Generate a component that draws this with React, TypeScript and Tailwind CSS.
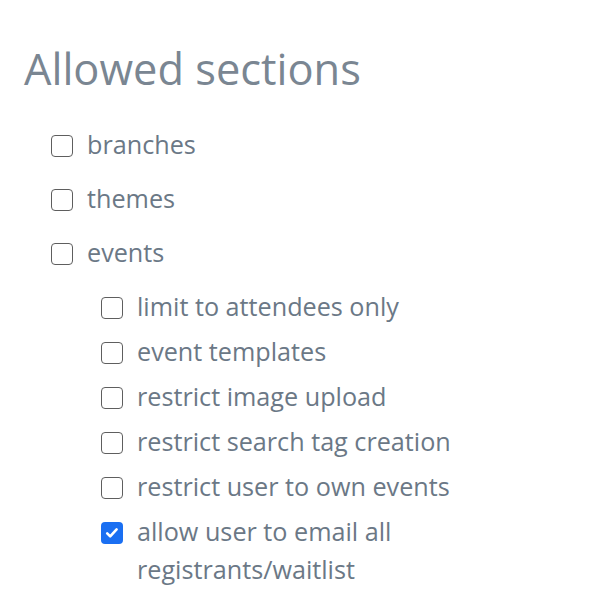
import React from 'react';

type Item = { label: string; checked?: boolean };

const topItems: Item[] = [{ label: 'branches' }, { label: 'themes' }, { label: 'events' }];

const eventItems: Item[] = [
  { label: 'limit to attendees only' },
  { label: 'event templates' },
  { label: 'restrict image upload' },
  { label: 'restrict search tag creation' },
  { label: 'restrict user to own events' },
  { label: 'allow user to email all registrants/waitlist', checked: true },
];

function Box({ checked }: { checked?: boolean }) {
  if (checked) {
    return (
      <span className="mt-[10px] flex h-[22px] w-[22px] shrink-0 items-center justify-center rounded-[4px] bg-[#1a6ff2]">
        <svg viewBox="0 0 16 16" className="h-[16px] w-[16px]" fill="none">
          <path d="M3.2 8.4l3 3 6.4-7" stroke="white" strokeWidth="2.6" strokeLinecap="round" strokeLinejoin="round" />
        </svg>
      </span>
    );
  }
  return <span className="mt-[10px] h-[22px] w-[22px] shrink-0 rounded-[4px] border-[1.5px] border-[#5e5e5e] bg-white" />;
}

function Row({ item }: { item: Item }) {
  return (
    <li className="flex items-start gap-[14px]">
      <Box checked={item.checked} />
      <span className="max-w-[330px] text-[25.2px] leading-[38px] text-[#6b7886]">{item.label}</span>
    </li>
  );
}

export default function App() {
  return (
    <div className="min-h-screen bg-white pl-6 pt-[43px]" style={{ fontFamily: '"Open Sans", sans-serif' }}>
      <h1 className="text-[43.4px] leading-[52px] text-[#7a8692]">Allowed sections</h1>
      <ul className="mt-[30px] flex flex-col gap-4 pl-[27px]">
        {topItems.map((item) => (
          <Row key={item.label} item={item} />
        ))}
      </ul>
      <ul className="mt-[16px] flex flex-col gap-[7px] pl-[77px]">
        {eventItems.map((item) => (
          <Row key={item.label} item={item} />
        ))}
      </ul>
    </div>
  );
}
